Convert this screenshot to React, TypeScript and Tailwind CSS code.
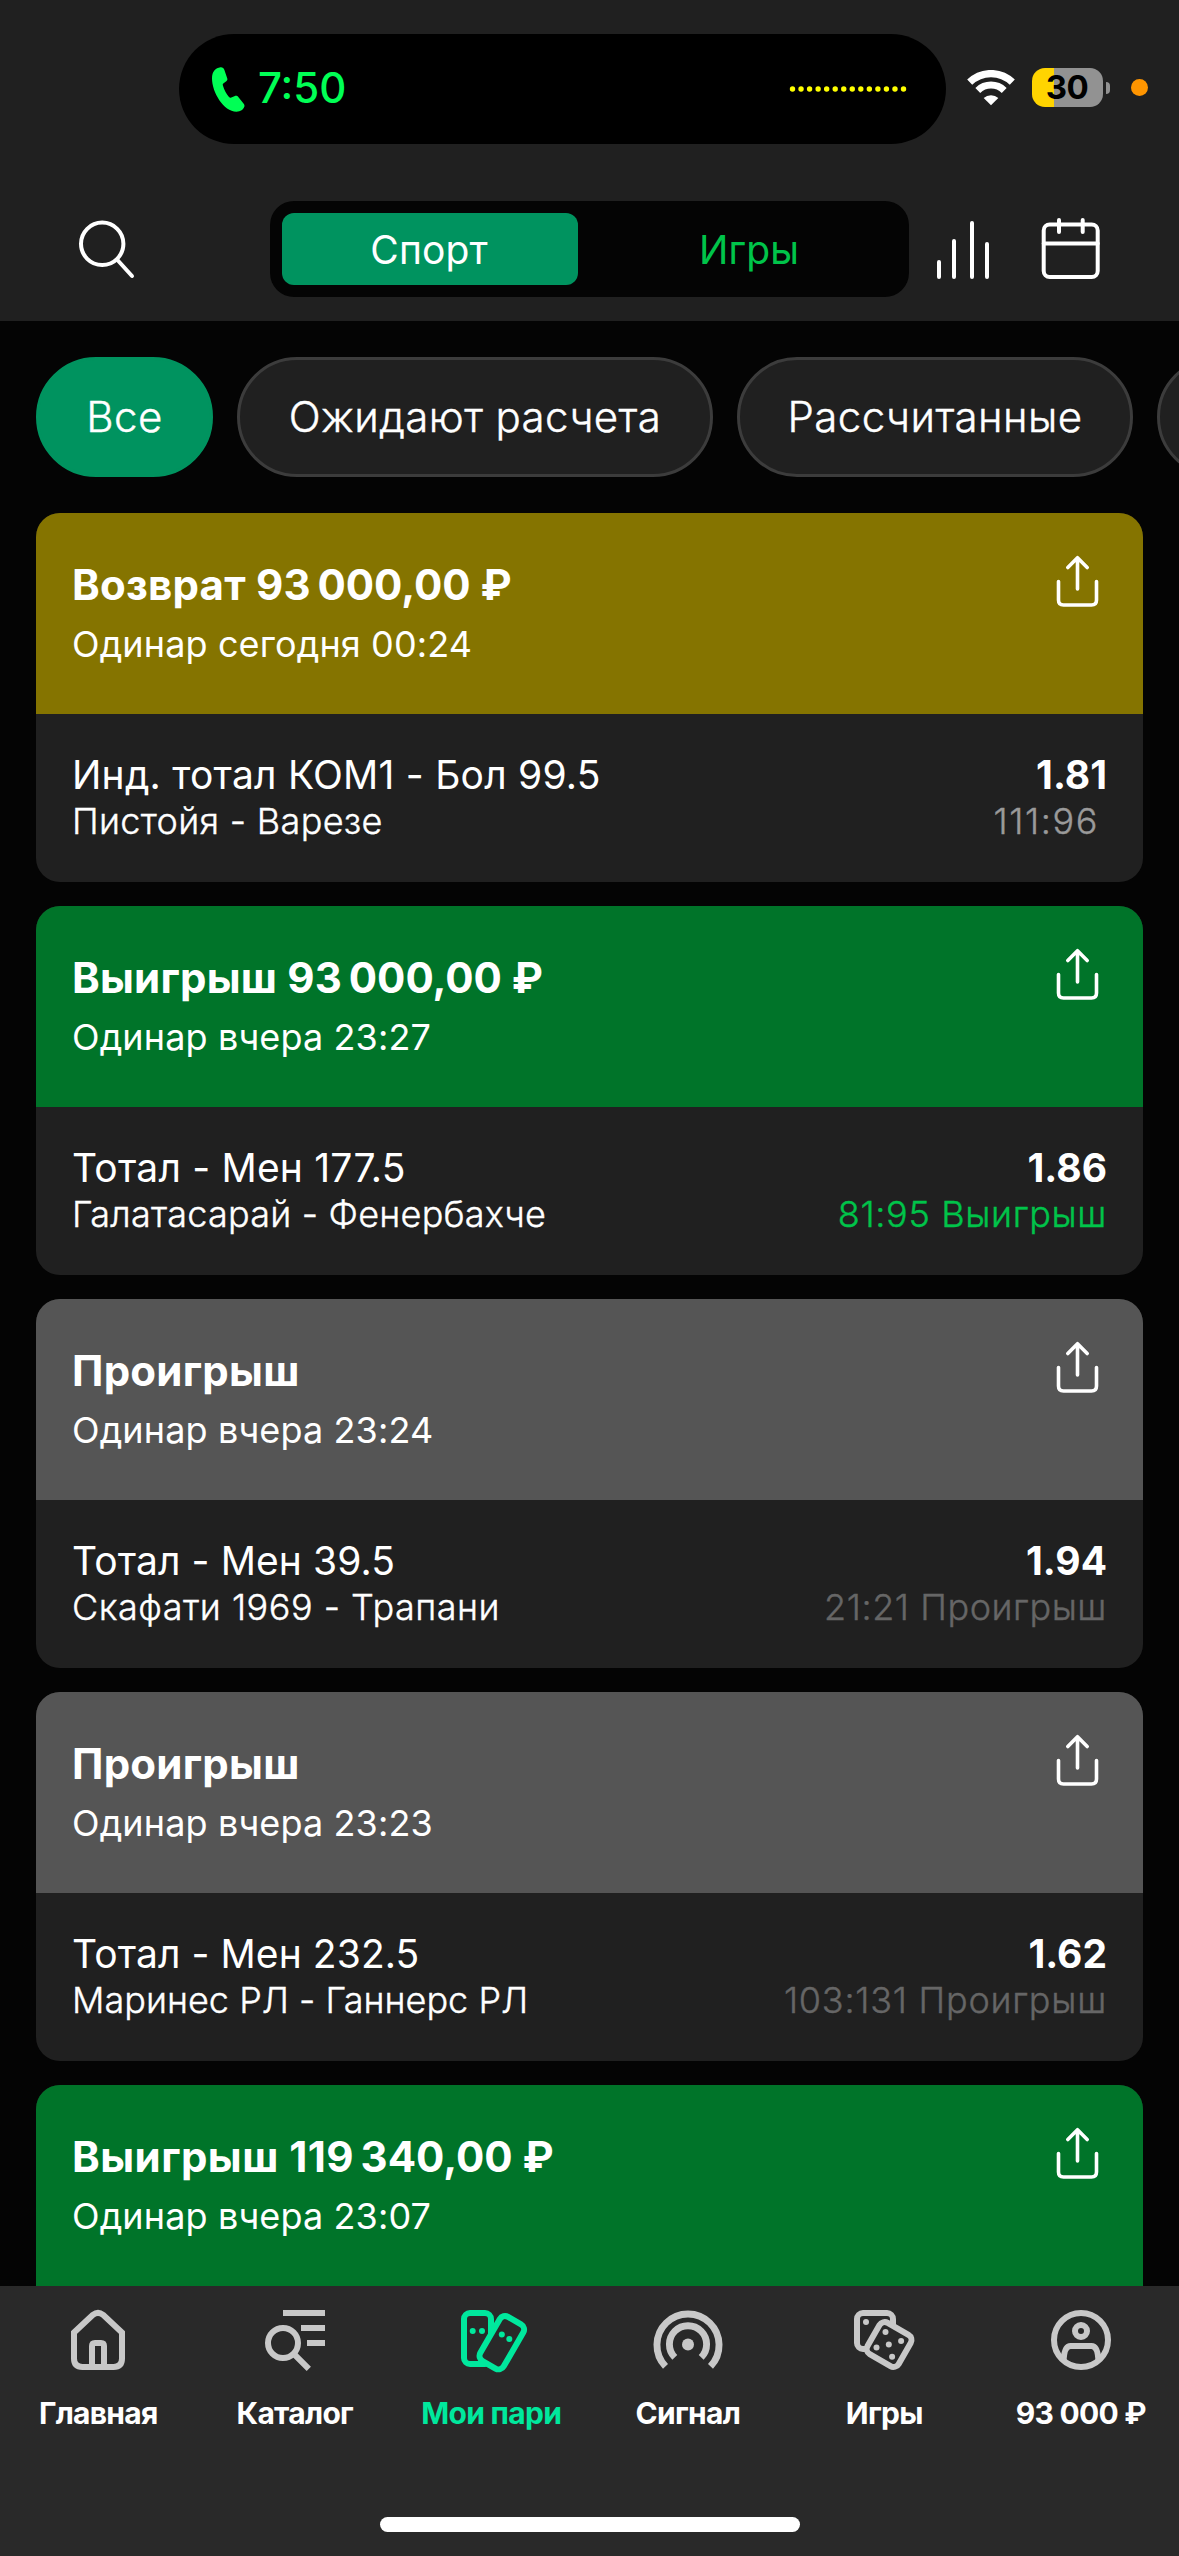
import { useState } from "react";
import type { ReactNode } from "react";

type Bet = {
  id: number;
  title: string;
  titleClass: string;
  subtitle: string;
  headerClass: string;
  market?: string;
  marketClass?: string;
  teams?: string;
  teamsClass?: string;
  odds?: string;
  score?: string;
  scoreClass?: string;
};

const bets: Bet[] = [
  {
    id: 1,
    title: "Возврат 93\u202f000,00 ₽",
    titleClass: "tracking-[0.22px]",
    subtitle: "Одинар сегодня 00:24",
    headerClass: "bg-[#857400]",
    market: "Инд. тотал КОМ1 - Бол 99.5",
    marketClass: "tracking-[0.22px]",
    teams: "Пистойя - Варезе",
    teamsClass: "tracking-[0.32px]",
    odds: "1.81",
    score: "111:96",
    scoreClass: "pr-2 tracking-[1.6px] text-[#9a9a9a]",
  },
  {
    id: 2,
    title: "Выигрыш 93\u202f000,00 ₽",
    titleClass: "tracking-[0.22px]",
    subtitle: "Одинар вчера 23:27",
    headerClass: "bg-[#007429]",
    market: "Тотал - Мен 177.5",
    marketClass: "tracking-[0.2px]",
    teams: "Галатасарай - Фенербахче",
    teamsClass: "tracking-[0.22px]",
    odds: "1.86",
    score: "81:95 Выигрыш",
    scoreClass: "tracking-[0.65px] text-[#00c44a]",
  },
  {
    id: 3,
    title: "Проигрыш",
    titleClass: "tracking-[0.25px]",
    subtitle: "Одинар вчера 23:24",
    headerClass: "bg-[#555555]",
    market: "Тотал - Мен 39.5",
    marketClass: "tracking-[0.1px]",
    teams: "Скафати 1969 - Трапани",
    teamsClass: "tracking-[0.5px]",
    odds: "1.94",
    score: "21:21 Проигрыш",
    scoreClass: "tracking-[0.55px] text-[#666666]",
  },
  {
    id: 4,
    title: "Проигрыш",
    titleClass: "tracking-[0.25px]",
    subtitle: "Одинар вчера 23:23",
    headerClass: "bg-[#555555]",
    market: "Тотал - Мен 232.5",
    marketClass: "tracking-[0.08px]",
    teams: "Маринес РЛ - Ганнерс РЛ",
    teamsClass: "tracking-[0.02px]",
    odds: "1.62",
    score: "103:131 Проигрыш",
    scoreClass: "tracking-[0.75px] text-[#666666]",
  },
  {
    id: 5,
    title: "Выигрыш 119\u202f340,00 ₽",
    titleClass: "tracking-[0.45px]",
    subtitle: "Одинар вчера 23:07",
    headerClass: "bg-[#007429]",
  },
];

const filters = [
  { label: "Все", className: "w-[177px]" },
  { label: "Ожидают расчета", className: "w-[476px]" },
  { label: "Рассчитанные", className: "w-[396px]" },
  { label: "", className: "w-[240px]" },
];

function StatusBar() {
  return (
    <div className="flex h-[178px] items-start pl-[179px] pt-[34px]">
      <div className="flex h-[110px] w-[767px] shrink-0 items-center rounded-full bg-black pl-[33px] pr-[39px]">
        <svg className="h-[45px] w-[33px]" viewBox="0 0 33 45" fill="#00ff55">
          <path d="M8.5 0.3C3.5 1 0 4.500 0 11.500C0 25 11.500 44.700 24.500 44.700C28.500 44.700 31.500 42.500 32.400 39.500C32.700 38.300 32.300 37.500 31.500 36.500L26.500 30.200C25.300 28.700 24 28.500 22.400 29.200L19.300 30.600C18.300 31 17.700 30.800 17 30C14.300 26.800 12.200 23 10.900 18.500C10.600 17.500 10.700 16.900 11.600 16.200L14.300 14.200C15.400 13.400 15.600 12.400 15.200 11.200L12.400 3.100C11.700 1 10.400 0.100 8.500 0.300Z" />
        </svg>
        <span className="ml-[13px] pb-[3px] text-[42px] font-medium text-[#00ff55]">7:50</span>
        <svg className="ml-auto h-[6px] w-[118px]" viewBox="0 0 118 6" fill="#ffff00">
          {Array.from({ length: 14 }, (_, i) => (
            <circle key={i} cx={3.5 + i * 8.54} cy="3" r="2.7" />
          ))}
        </svg>
      </div>
      <div className="flex h-[107px] items-center">
        <svg className="ml-[21px] h-[36px] w-[48px]" viewBox="0 0 48 36" fill="none" stroke="#fff">
          <path d="M2.700 12.200A30.500 30.500 0 0 1 45.300 12.200" strokeWidth="7.200" />
          <path d="M10.800 20.400A19 19 0 0 1 37.200 20.400" strokeWidth="7" />
          <path d="M24 35.300L16.700 28A11 11 0 0 1 31.300 28Z" fill="#fff" stroke="none" />
        </svg>
        <div className="ml-[17px] flex h-[39px] w-[71px] items-center justify-center rounded-[13px] bg-[linear-gradient(90deg,#ffd400_22px,#929292_22px)]">
          <span className="pr-px text-[33px] font-bold leading-none tracking-[-0.5px] text-black">30</span>
        </div>
        <div className="ml-[3px] h-[12px] w-[4px] rounded-r-full bg-[#929292]" />
        <div className="ml-[21px] size-[17px] rounded-full bg-[#ff9500]" />
      </div>
    </div>
  );
}

function Header() {
  const [tab, setTab] = useState("Спорт");

  return (
    <header className="h-[321px] shrink-0 bg-[#202020]">
      <StatusBar />
      <div className="flex items-center pt-[23px]">
        <button className="ml-[76px]">
          <svg className="size-[60px]" viewBox="0 0 60 60" fill="none" stroke="#fff" strokeWidth="4" strokeLinecap="round">
            <circle cx="26.200" cy="24.800" r="21.200" />
            <path d="M41 40.500L56 57" />
          </svg>
        </button>
        <div className="ml-[134px] flex h-[96px] w-[639px] rounded-[24px] bg-[#040404] p-3">
          {["Спорт", "Игры"].map((name) => (
            <button
              key={name}
              onClick={() => setTab(name)}
              className={`h-[72px] pt-[3px] text-[39px] tracking-[0.1px] first:pr-[2px] last:pl-[23px] ${
                tab === name ? "w-[296px] rounded-[12px] bg-[#00935f] text-white" : "flex-1 text-[#00c44a]"
              }`}
            >
              {name}
            </button>
          ))}
        </div>
        <button className="ml-[27px]">
          <svg className="h-[62px] w-[54px]" viewBox="0 0 54 62" fill="none" stroke="#fff" strokeWidth="4" strokeLinecap="round">
            <path d="M3 44V59M18 23V59M36 5V59M51 26V59" />
          </svg>
        </button>
        <button className="ml-[51px]">
          <svg className="h-[62px] w-[60px]" viewBox="0 0 60 62" fill="none" stroke="#fff" strokeWidth="4" strokeLinecap="round">
            <rect x="2.700" y="6.500" width="54" height="52.500" rx="6" />
            <path d="M2.700 25.500H56.700M18 2V14M41.700 2V14" />
          </svg>
        </button>
      </div>
    </header>
  );
}

function Filters() {
  const [active, setActive] = useState("Все");

  return (
    <div className="flex shrink-0 gap-6 overflow-hidden px-9 pt-9">
      {filters.map((f) => (
        <button
          key={f.label}
          onClick={() => setActive(f.label)}
          className={`h-[120px] shrink-0 whitespace-nowrap rounded-full border-[3px] pb-px text-[42px] font-light tracking-[0.42px] text-white [-webkit-text-stroke:0.4px] ${f.className} ${
            active === f.label ? "border-[#00935f] bg-[#00935f]" : "border-[#3c3c3c] bg-[#202020]"
          }`}
        >
          {f.label}
        </button>
      ))}
    </div>
  );
}

function ShareIcon() {
  return (
    <svg className="h-[54px] w-[44px]" viewBox="0 0 44 54" fill="none" stroke="#fff" strokeWidth="3.600" strokeLinecap="round" strokeLinejoin="round">
      <path d="M2.500 26.500V45Q2.500 50 7.500 50H35.500Q40.500 50 40.500 45V26.500" />
      <path d="M21.500 34V3M11.800 12.500L21.500 2.700L31.200 12.500" />
    </svg>
  );
}

function BetCard({ bet }: { bet: Bet }) {
  return (
    <div className="shrink-0 overflow-hidden rounded-[24px] bg-[#202020]">
      <div className={`flex h-[201px] justify-between pl-9 pr-[43px] pt-[42px] ${bet.headerClass}`}>
        <div>
          <div className={`text-[42px] font-bold leading-[60px] text-white ${bet.titleClass}`}>{bet.title}</div>
          <div className="mt-[5px] text-[36px] leading-[48px] tracking-[0.12px] text-white">{bet.subtitle}</div>
        </div>
        <button className="h-[54px]">
          <ShareIcon />
        </button>
      </div>
      <div className="h-[168px] px-9 pt-[37px]">
        <div className="flex justify-between text-[39px] leading-[48px] text-white">
          <span className={bet.marketClass}>{bet.market}</span>
          <span className="font-bold">{bet.odds}</span>
        </div>
        <div className="flex justify-between text-[36px] font-light leading-[44px] text-white [-webkit-text-stroke:0.4px]">
          <span className={bet.teamsClass}>{bet.teams}</span>
          <span className={bet.scoreClass}>{bet.score}</span>
        </div>
      </div>
    </div>
  );
}

const navItems: { label: string; active?: boolean; icon: ReactNode }[] = [
  {
    label: "Главная",
    icon: (
      <>
        <path d="M4 9.500L10.300 3.600Q12 2.300 13.700 3.600L20 9.500V18.200Q20 21 17.200 21H6.800Q4 21 4 18.200Z" />
        <path d="M10 21V14Q10 13 11 13H13Q14 13 14 14V21" />
      </>
    ),
  },
  {
    label: "Каталог",
    icon: (
      <>
        <circle cx="8" cy="13" r="5" />
        <path d="M11.600 16.600L16.600 21.600M8 3H22M14 8H22M16 13H22" />
      </>
    ),
  },
  {
    label: "Мои пари",
    active: true,
    icon: (
      <>
        <rect x="3" y="3" width="9" height="17" rx="2" />
        <rect x="11.100" y="4.400" width="9" height="17" rx="2" transform="rotate(30 15.600 12.900)" fill="#292929" />
        <g fill="currentColor" stroke="none">
          <circle cx="5.900" cy="9" r="1" />
          <circle cx="9" cy="9" r="1" />
          <circle cx="15.600" cy="10.200" r="1" />
          <circle cx="18.100" cy="11.700" r="1" />
        </g>
      </>
    ),
  },
  {
    label: "Сигнал",
    icon: (
      <>
        <path d="M4.500 20.800A10.350 10.350 0 1 1 19.500 20.800" strokeWidth="2.300" />
        <path d="M7.600 17.800A6.200 6.200 0 1 1 16.400 17.800" strokeWidth="2.300" />
        <circle cx="12" cy="13.500" r="2" fill="currentColor" stroke="none" />
      </>
    ),
  },
  {
    label: "Игры",
    icon: (
      <>
        <rect x="3" y="3" width="12" height="12" rx="2" />
        <rect x="7.700" y="7.500" width="12" height="12" rx="2" transform="rotate(30 13.700 13.500)" fill="#292929" />
        <g fill="currentColor" stroke="none">
          <circle cx="6" cy="6" r="1" />
          <circle cx="12.500" cy="9.300" r="1" />
          <circle cx="17.700" cy="12.300" r="1" />
          <circle cx="13.600" cy="13.500" r="1" />
          <circle cx="9.500" cy="14.500" r="1" />
          <circle cx="14.700" cy="17.600" r="1" />
        </g>
      </>
    ),
  },
  {
    label: "93\u00a0000 ₽",
    icon: (
      <>
        <circle cx="12" cy="12" r="9" />
        <circle cx="12" cy="9" r="2" />
        <path d="M6.200 18.500C6.400 15.700 7 14 8.500 14H15.500C17 14 17.600 15.700 17.800 18.500" />
      </>
    ),
  },
];

function BottomNav() {
  return (
    <nav className="flex h-[270px] shrink-0 flex-col items-center justify-between bg-[#292929] pb-6 pt-[18px]">
      <div className="grid w-full grid-cols-6">
        {navItems.map((item) => (
          <button
            key={item.label}
            className={`flex flex-col items-center gap-[19px] ${item.active ? "text-[#00e89d]" : "text-white"}`}
          >
            <svg
              className={`size-[72px] overflow-visible ${item.active ? "text-[#00e89d]" : "text-[#c8c8c8]"}`}
              viewBox="0 0 24 24"
              fill="none"
              stroke="currentColor"
              strokeWidth="2"
            >
              {item.icon}
            </svg>
            <span className="whitespace-nowrap text-[30px] font-bold leading-[36px] tracking-[-0.72px]">{item.label}</span>
          </button>
        ))}
      </div>
      <div className="h-[15px] w-[420px] rounded-full bg-white" />
    </nav>
  );
}

export default function App() {
  return (
    <div className="flex h-[2556px] w-[1179px] flex-col overflow-hidden bg-[#040404] font-['Inter',sans-serif]">
      <Header />
      <Filters />
      <main className="flex min-h-0 flex-1 flex-col gap-6 overflow-hidden px-9 pt-9">
        {bets.map((bet) => (
          <BetCard key={bet.id} bet={bet} />
        ))}
      </main>
      <BottomNav />
    </div>
  );
}
